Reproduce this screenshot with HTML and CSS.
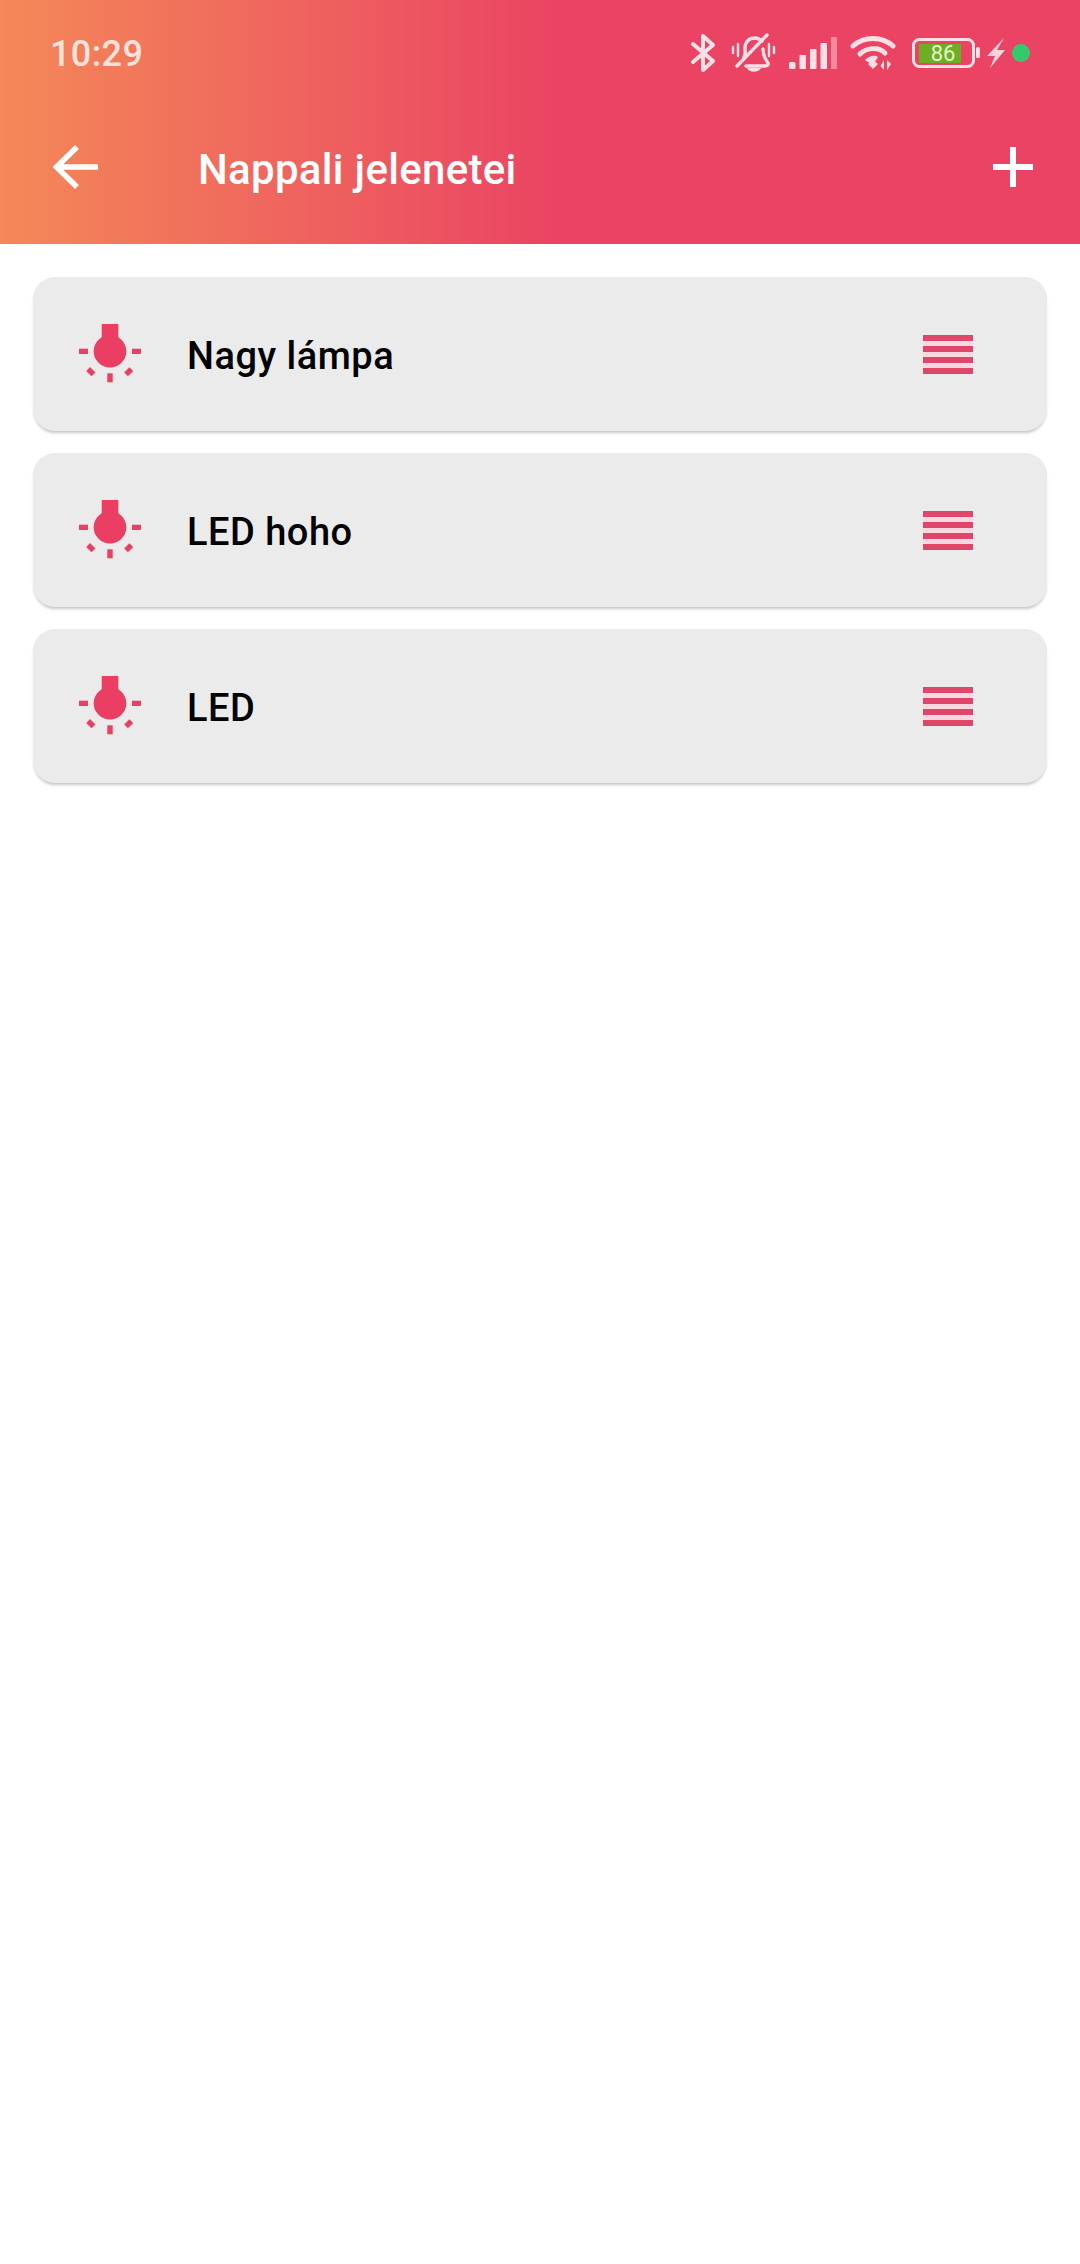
FILE: index.html
```html
<!DOCTYPE html>
<html lang="hu">
<head>
<meta charset="utf-8">
<title>Nappali jelenetei</title>
<link rel="stylesheet" href="styles.css">
</head>
<body>
<header class="appbar">
  <div class="status">
    <span class="time">10:29</span>
    <div class="status-icons">
      <svg class="ic-bt" viewBox="0 0 25 40" width="25" height="40"><path d="M2 11 L22 28 L12 37 V3 L22 12 L2 29" fill="none" stroke="#fde0e6" stroke-width="4" stroke-linejoin="round" stroke-linecap="round"/></svg>
      <svg class="ic-bell" viewBox="0 0 45 40" width="45" height="40"><g fill="none" stroke="#fde0e6" stroke-linecap="round"><path d="M13 24 C15 21 14 18 14 15 C14 9 18 5 24 5 C27 5 29 6 31 8" stroke-width="3.400"/><path d="M32 16 C32 22 34 26 37 30 C38 32 36 33 34 33 H15" stroke-width="3.400"/><path d="M6 33 L36 2" stroke-width="3.400"/><path d="M2 14 V20 M7 11 V23 M38 11 V23 M43 14 V20" stroke-width="2.400"/></g><path d="M16 35 H30 C28 40 18 40 16 35 Z" fill="#fde0e6"/></svg>
      <svg class="ic-sig" viewBox="0 0 48 32" width="48" height="32"><g fill="#fde0e6"><rect x="0" y="25" width="6.500" height="7" rx="1.500"/><rect x="10.500" y="18" width="6.500" height="14" rx="1"/><rect x="21" y="12" width="6.500" height="20" rx="1"/><rect x="31.500" y="6" width="6.500" height="26" rx="1"/></g><rect x="42" y="0" width="6" height="32" fill="#fde0e6" opacity=".45"/></svg>
      <svg class="ic-wifi" viewBox="0 0 46 34" width="46" height="34"><g fill="none" stroke="#fde0e6" stroke-linecap="round"><path d="M3 10 C14 0 32 0 43 10" stroke-width="5"/><path d="M10 18 C17 11 29 11 35 17" stroke-width="5"/></g><path d="M15 24 C20 19 25 19 28 21 L23 29 Z" fill="#fde0e6"/><path d="M18 28 L23 24 L28 28 L23 33 Z" fill="#fde0e6"/><path d="M34 24 V34 L30.500 30 Z M37 24 V34 L41 28 Z" fill="#fde0e6"/></svg>
      <svg class="ic-batt" viewBox="0 0 68 30" width="68" height="30"><rect x="1.500" y="1.500" width="60" height="27" rx="6" fill="none" stroke="#fde0e6" stroke-width="3"/><rect x="7" y="6" width="42" height="19" fill="#6cae24"/><rect x="64" y="9" width="4" height="11" rx="1.500" fill="#fde0e6"/><text x="31" y="23" class="batt-num">86</text></svg>
      <svg class="ic-bolt" viewBox="0 0 18 30" width="18" height="30"><path d="M17 0 L0 18 H8 L3 30 L18 12 H10 Z" fill="#fbd3dc"/></svg>
      <span class="dot"></span>
    </div>
  </div>
  <div class="toolbar">
    <svg class="back" viewBox="0 0 46 44" width="46" height="44"><path d="M45 22 H4 M24 2 L3.500 22 L24 42" fill="none" stroke="#fff" stroke-width="5.500"/></svg>
    <h1 class="title">Nappali jelenetei</h1>
    <svg class="plus" viewBox="0 0 40 40" width="40" height="40"><path d="M20 0 V40 M0 20 H40" fill="none" stroke="#fff" stroke-width="6"/></svg>
  </div>
</header>
<main class="list">
  <article class="card">
    <svg class="bulb" viewBox="0 0 62 60" width="62" height="60"><use href="#bulb-shape"/></svg>
    <span class="name">Nagy lámpa</span>
    <span class="handle"><i></i><i></i><i></i><i></i></span>
  </article>
  <article class="card">
    <svg class="bulb" viewBox="0 0 62 60" width="62" height="60"><use href="#bulb-shape"/></svg>
    <span class="name">LED hoho</span>
    <span class="handle"><i></i><i></i><i></i><i></i></span>
  </article>
  <article class="card">
    <svg class="bulb" viewBox="0 0 62 60" width="62" height="60"><use href="#bulb-shape"/></svg>
    <span class="name">LED</span>
    <span class="handle"><i></i><i></i><i></i><i></i></span>
  </article>
</main>
<svg class="defs" width="0" height="0"><defs><g id="bulb-shape" fill="#ea3f62"><rect x="22.700" y="0" width="16.600" height="18"/><circle cx="31" cy="27.300" r="16.300"/><rect x="0" y="24.700" width="9" height="5.300"/><rect x="53" y="24.700" width="9" height="5.300"/><rect x="28.300" y="49.300" width="5.400" height="9"/><rect x="9" y="44" width="5.500" height="7.500" transform="rotate(-45 11.700 47.700)"/><rect x="47" y="44" width="5.500" height="7.500" transform="rotate(45 49.700 47.700)"/></g></defs></svg>
</body>
</html>
```
FILE: styles.css
```css
* { box-sizing: border-box; }
html, body { margin: 0; padding: 0; }
body { background: #fff; font-family: Roboto, "Noto Sans", sans-serif; width: 1080px; min-height: 2264px; }

.appbar {
  height: 244px;
  background: linear-gradient(90deg, #f48858 0%, #ea4363 52%, #ea4363 100%);
}
.status {
  height: 106px;
  display: flex;
  align-items: center;
  justify-content: space-between;
  padding: 2px 50px 0 50px;
}
.time { font-size: 36px; font-weight: 500; color: #fde3da; letter-spacing: .4px; }
.status-icons { display: flex; align-items: center; margin-top: -2px; }
.status-icons svg { display: block; flex: none; }
.ic-bt { margin-right: 15px; }
.ic-bell { margin-right: 13px; }
.ic-sig { margin-right: 13px; }
.ic-wifi { margin-right: 16px; }
.ic-batt { margin-right: 7px; }
.ic-bolt { margin-right: 7px; }
.batt-num { font-family: Roboto, sans-serif; font-size: 22px; fill: #e4f7c4; text-anchor: middle; }
.dot { width: 18px; height: 18px; border-radius: 50%; background: #35c96e; }

.toolbar {
  height: 122px;
  display: flex;
  align-items: center;
  padding: 0 47px 0 53px;
}
.back { flex: none; margin-right: 99px; }
.title {
  flex: 1;
  margin: 4px 0 0;
  font-size: 42px;
  font-weight: 500;
  letter-spacing: .3px;
  color: #fff;
}
.plus { flex: none; }

.list {
  display: flex;
  flex-direction: column;
  gap: 22px;
  padding: 33px 33px 0 33px;
}
.card {
  height: 154px;
  display: flex;
  align-items: center;
  padding: 0 74px 0 46px;
  background: #ebebeb;
  border-radius: 22px;
  box-shadow: 0 3px 3px -1px rgba(0, 0, 0, .22);
}
.bulb { flex: none; margin-right: 46px; }
.name { flex: 1; font-size: 38px; font-weight: 500; color: #000; letter-spacing: .5px; margin-top: 3px; }
.handle {
  flex: none;
  width: 50px;
  display: flex;
  flex-direction: column;
  gap: 5px;
  background: #f8d9e1;
}
.handle i { display: block; height: 6px; background: #e0466a; }
.defs { position: absolute; }
```
